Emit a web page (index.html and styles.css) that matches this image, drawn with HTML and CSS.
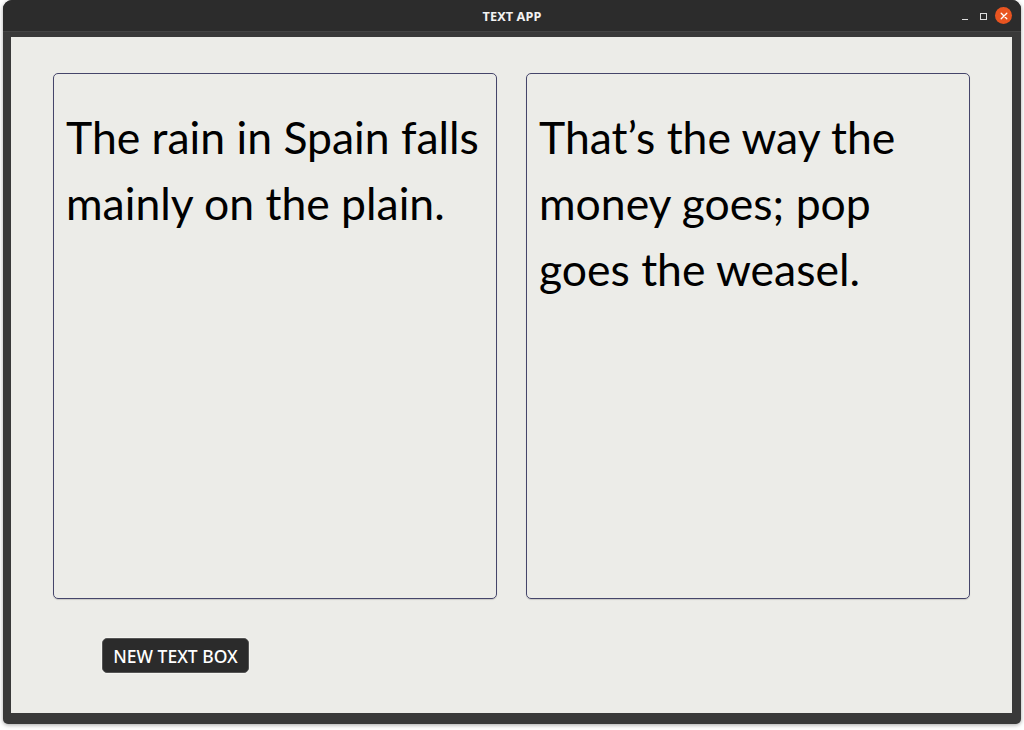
FILE: index.html
```html
<!DOCTYPE html>
<html>
<head>
<meta charset="utf-8">
<link rel="stylesheet" href="styles.css">
</head>
<body>
<div class="window">
  <div class="titlebar">
    <div class="title">TEXT APP</div>
    <div class="controls">
      <span class="ctl min"></span>
      <span class="ctl max"></span>
      <span class="ctl close">
        <svg width="16" height="16" viewBox="0 0 16 16"><path d="M5.2 5.2 L10.8 10.8 M10.8 5.2 L5.2 10.8" stroke="#fff" stroke-width="1.3" stroke-linecap="round"/></svg>
      </span>
    </div>
  </div>
  <div class="frame">
    <div class="content">
      <div class="cards">
        <div class="card">The rain in Spain falls mainly on the plain.</div>
        <div class="card">That’s the way the money goes; pop goes the weasel.</div>
      </div>
      <div class="actions">
        <button class="btn">NEW TEXT BOX</button>
      </div>
    </div>
  </div>
</div>
</body>
</html>
```

FILE: styles.css
```css
html, body {
  margin: 0;
  padding: 0;
  background: #ffffff;
}
body {
  width: 1024px;
  height: 730px;
  overflow: hidden;
}
.window {
  margin: 0 3px;
  width: 1018px;
  height: 724px;
  background: #393939;
  border-radius: 9px 9px 5px 5px;
  box-shadow: 0 1px 4px rgba(0,0,0,0.35);
  display: flex;
  flex-direction: column;
  overflow: hidden;
}
.titlebar {
  height: 31px;
  background: #2c2c2c;
  border-bottom: 1px solid #444;
  position: relative;
  display: flex;
  align-items: center;
  justify-content: center;
  flex: none;
}
.title {
  color: #f2f2f2;
  font-family: "Noto Sans", "DejaVu Sans", sans-serif;
  font-weight: 700;
  font-size: 12.7px;
  letter-spacing: 0.1px;
}
.controls {
  position: absolute;
  right: 9px;
  top: 7px;
  display: flex;
  align-items: center;
  gap: 2px;
}
.ctl {
  width: 17px;
  height: 17px;
  display: flex;
  align-items: center;
  justify-content: center;
  position: relative;
}
.min::after {
  content: "";
  width: 6px;
  height: 1px;
  background: #ddd;
  margin-top: 7px;
}
.max::after {
  content: "";
  width: 5px;
  height: 5px;
  border: 1px solid #ddd;
  margin-top: 1px;
}
.close {
  background: #e95420;
  border-radius: 50%;
  margin-left: 1px;
}
.frame {
  flex: 1;
  padding: 5px 9px 11px 8px;
  display: flex;
}
.content {
  flex: 1;
  background: #ececE8;
  padding: 36px 42px 0 42px;
  display: flex;
  flex-direction: column;
}
.cards {
  display: flex;
  gap: 29px;
}
.card {
  width: 444px;
  height: 526px;
  box-sizing: border-box;
  border: 1px solid #45456a;
  border-radius: 5px;
  box-shadow: 0 1px 1px rgba(0,0,0,0.15);
  padding: 30px 11px 0 12px;
  font-family: "Lato", "Noto Sans", sans-serif;
  font-size: 44.5px;
  line-height: 66px;
  color: #000;
}
.actions {
  padding: 39px 0 0 49px;
}
.btn {
  width: 147px;
  height: 35px;
  background: #2b2b2b;
  color: #fff;
  border: 1px solid #555;
  border-radius: 5px;
  font-family: "Noto Sans", "Open Sans", sans-serif;
  font-weight: 500;
  font-size: 17.5px;
  padding: 0;
  letter-spacing: 0;
  box-shadow: 0 0 0 1px #f4f4f0;
}
```
